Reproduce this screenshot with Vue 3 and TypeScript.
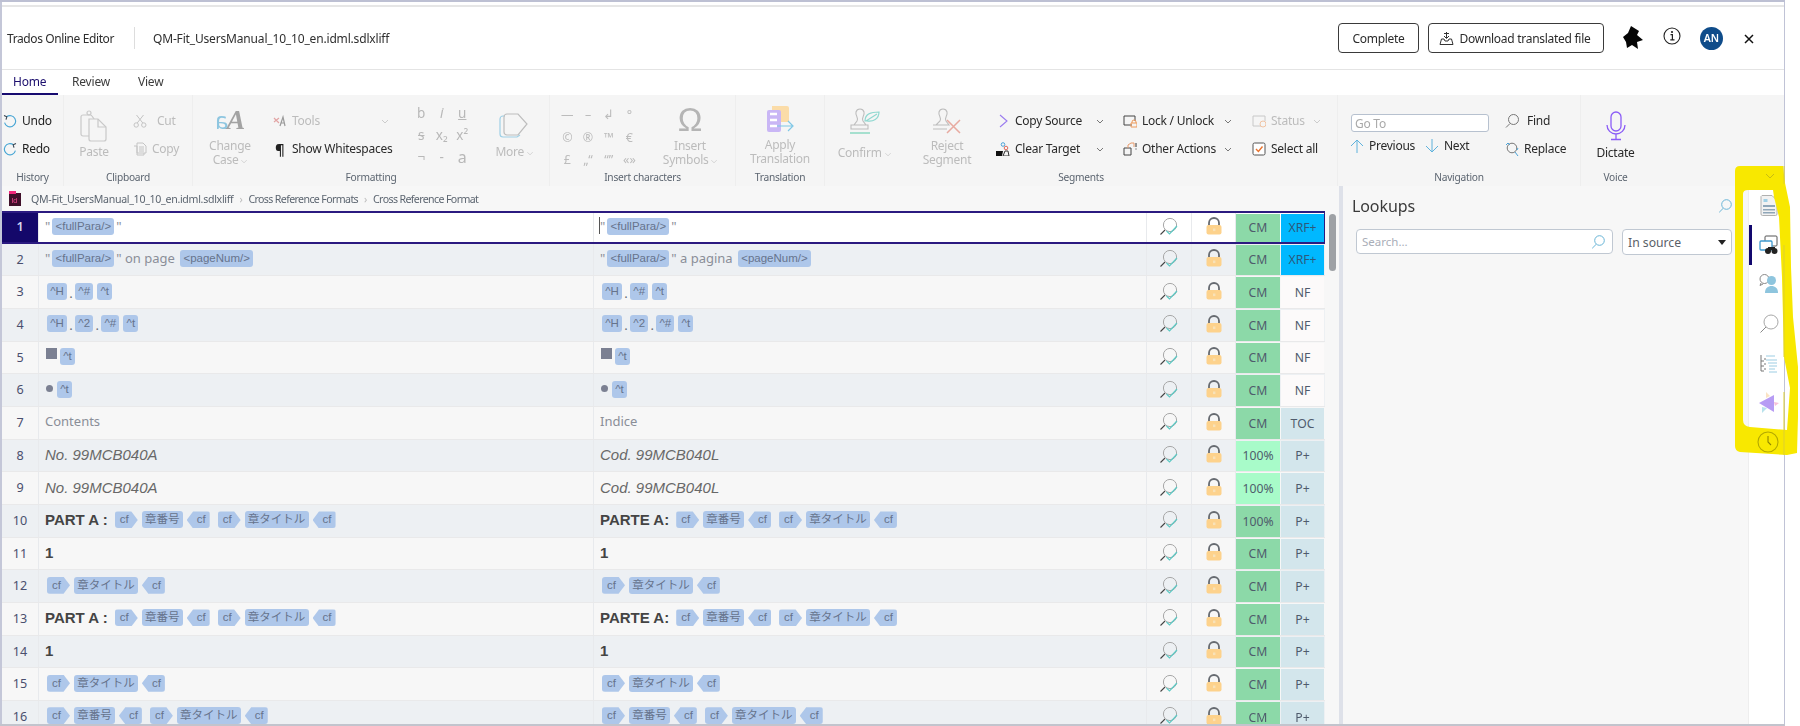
<script setup lang="ts">
type Piece = { k: 'tag' | 'cfr' | 'cfl' | 'txt' | 'it' | 'bd' | 'sq' | 'dot' | 'dt'; s?: string }
const tag = (s: string): Piece => ({ k: 'tag', s })
const txt = (s: string): Piece => ({ k: 'txt', s })
const dt: Piece = { k: 'dt', s: '.' }
const cr: Piece = { k: 'cfr', s: 'cf' }
const cl: Piece = { k: 'cfl', s: 'cf' }
const ban = tag('章番号')
const tit = tag('章タイトル')
const full = tag('<fullPara/>')
const num = tag('<pageNum/>')
const H = tag('^H'), H2 = tag('^2'), Hs = tag('^#'), Ht = tag('^t')
const chain = [cr, ban, cl, { k: 'dt', s: ' ' } as Piece, cr, tit, cl]
const chain2 = [cr, tit, cl]

interface Row { n: number; src: Piece[]; tgt: Piece[]; st: string; stc: string; ty: string; tyc: string }
const mk = (n: number, src: Piece[], tgt: Piece[], st: string, stc: string, ty: string, tyc: string): Row => ({ n, src, tgt, st, stc, ty, tyc })
const rows: Row[] = [
  mk(1, [txt('"'), full, txt('"')], [txt('"'), full, txt('"')], 'CM', 'cm', 'XRF+', 'xrf'),
  mk(2, [txt('"'), full, txt('" on page '), num], [txt('"'), full, txt('" a pagina '), num], 'CM', 'cm', 'XRF+', 'xrf'),
  mk(3, [H, dt, Hs, Ht], [H, dt, Hs, Ht], 'CM', 'cm', 'NF', 'nf'),
  mk(4, [H, dt, H2, dt, Hs, Ht], [H, dt, H2, dt, Hs, Ht], 'CM', 'cm', 'NF', 'nf'),
  mk(5, [{ k: 'sq' }, Ht], [{ k: 'sq' }, Ht], 'CM', 'cm', 'NF', 'nf'),
  mk(6, [{ k: 'dot' }, Ht], [{ k: 'dot' }, Ht], 'CM', 'cm', 'NF', 'nf'),
  mk(7, [txt('Contents')], [txt('Indice')], 'CM', 'cm', 'TOC', 'pp'),
  mk(8, [{ k: 'it', s: 'No. 99MCB040A' }], [{ k: 'it', s: 'Cod. 99MCB040L' }], '100%', 'lt', 'P+', 'pp'),
  mk(9, [{ k: 'it', s: 'No. 99MCB040A' }], [{ k: 'it', s: 'Cod. 99MCB040L' }], '100%', 'lt', 'P+', 'pp'),
  mk(10, [{ k: 'bd', s: 'PART A :' }, ...chain], [{ k: 'bd', s: 'PARTE A:' }, ...chain], '100%', 'cm', 'P+', 'pp'),
  mk(11, [{ k: 'bd', s: '1' }], [{ k: 'bd', s: '1' }], 'CM', 'cm', 'P+', 'pp'),
  mk(12, chain2, chain2, 'CM', 'cm', 'P+', 'pp'),
  mk(13, [{ k: 'bd', s: 'PART A :' }, ...chain], [{ k: 'bd', s: 'PARTE A:' }, ...chain], 'CM', 'cm', 'P+', 'pp'),
  mk(14, [{ k: 'bd', s: '1' }], [{ k: 'bd', s: '1' }], 'CM', 'cm', 'P+', 'pp'),
  mk(15, chain2, chain2, 'CM', 'cm', 'P+', 'pp'),
  mk(16, chain, chain, 'CM', 'cm', 'P+', 'pp'),
]
const fmt = ['b', 'i', 'u', 's', 'x₂', 'x²', '¬', '-', 'a']
const chars = ['—', '–', '↲', '°', '©', '®', '™', '€', '£', '„“', '“”', '«»']
</script>

<template>
  <div class="page">
    <div class="frame">
      <div class="topband"></div>
      <div class="topgap"></div>
      <div class="topline"></div>

      <header class="head">
        <span class="brand">Trados Online Editor</span>
        <span class="vsep"></span>
        <span class="fname">QM-Fit_UsersManual_10_10_en.idml.sdlxliff</span>
        <span class="grow"></span>
        <button class="hbtn complete">Complete</button>
        <button class="hbtn download">
          <svg width="15" height="15" viewBox="0 0 15 15" fill="none" stroke="#333" stroke-width="1"><path d="M7.500 1v6M5 5l2.500 2.500L10 5M5 2.500h5"/><path d="M2.500 8 1 13.500h13L12.500 8H10l-1 2H6L5 8z"/></svg>
          <span>Download translated file</span>
        </button>
        <svg class="star" width="22" height="24" viewBox="0 0 22 24"><path d="M8 0l8 5-2 4 6 5-6 2 1 7-6-4-5 3-1-6-3-5 5-4z" fill="#050505"/></svg>
        <svg class="info" width="18" height="18" viewBox="0 0 18 18" fill="none"><circle cx="9" cy="9" r="8" stroke="#222" stroke-width="1.100"/><path d="M7.500 7.700H9.400v5M7.300 12.900h4.200" stroke="#222" stroke-width="1.200"/><circle cx="9" cy="5" r="1.100" fill="#222"/></svg>
        <span class="avatar">AN</span>
        <svg class="close" width="10" height="10" viewBox="0 0 10 10" stroke="#111" stroke-width="1.500"><path d="M1 1l8 8M9 1L1 9"/></svg>
      </header>

      <nav class="tabs">
        <span class="tab active">Home</span>
        <span class="tab review">Review</span>
        <span class="tab view">View</span>
      </nav>

      <section class="ribbon">
        <div class="group g-history">
          <div class="body">
            <div class="stack">
              <div class="line">
                <svg class="ico14" viewBox="0 0 14 14" fill="none" stroke="#46a5d4" stroke-width="1.100"><path d="M3.600 2.800A5.600 5.600 0 1 1 1.600 8.600"/><path d="M1 1.600l2.800 1.200L3 5.600" stroke="#35424f"/></svg>
                <span class="t hist">Undo</span>
              </div>
              <div class="line">
                <svg class="ico14" viewBox="0 0 14 14" fill="none" stroke="#46a5d4" stroke-width="1.100"><path d="M10.400 2.800A5.600 5.600 0 1 0 12.400 8.600"/><path d="M13 1.600l-2.800 1.200.8 2.800" stroke="#35424f"/></svg>
                <span class="t hist">Redo</span>
              </div>
            </div>
          </div>
          <div class="glabel">History</div>
        </div>
        <div class="group g-clip">
          <div class="body">
            <div class="big paste">
              <svg width="28" height="32" viewBox="0 0 28 32" fill="none" stroke="#c9c9c9" stroke-width="1.200"><path d="M1 7a2 2 0 0 1 2-2h4l3 0a2 2 0 0 1 2 1l2 3v17H3a2 2 0 0 1-2-2z"/><path d="M9 9h9l8 8v12a2 2 0 0 1-2 2H11a2 2 0 0 1-2-2z" fill="#f5f5f5"/><path d="M18 9v8h8"/><circle cx="9" cy="3" r="2"/></svg>
              <span class="t dis">Paste</span>
            </div>
            <div class="stack clipstack">
              <div class="line">
                <svg class="ico14" viewBox="0 0 14 14" fill="none" stroke="#c4c4c4" stroke-width="1"><circle cx="3.200" cy="11" r="2.200"/><circle cx="10.800" cy="11" r="2.200"/><path d="M4.200 9 10.500 1M9.800 9 3.500 1"/></svg>
                <span class="t dis cut">Cut</span>
              </div>
              <div class="line">
                <svg class="ico14" viewBox="0 0 14 14" fill="none" stroke="#c4c4c4" stroke-width="1"><path d="M4 1h6l3 3v7H4zM1 4h3v9h7v-2M6 5h5M6 7h5M6 9h5"/></svg>
                <span class="t dis cp">Copy</span>
              </div>
            </div>
          </div>
          <div class="glabel">Clipboard</div>
        </div>
        <div class="group g-fmt">
          <div class="body">
            <div class="big change">
              <span class="aa"><i class="aa-a">a</i><b class="aa-b">A</b></span>
              <span class="t dis tl">Change<br />Case <em class="chev">⌵</em></span>
            </div>
            <div class="stack toolstack">
              <div class="line">
                <svg class="ico14" viewBox="0 0 14 14" fill="none" stroke-width="1.200"><path d="M1 4l5 5M1 8l5-4" stroke="#e2a4a4"/><path d="M7 12l3-9 2 9M8 9h3.500" stroke="#9a9a9a"/></svg>
                <span class="t dis">Tools</span>
                <svg class="chv dimchv" viewBox="0 0 8 5" fill="none" stroke="#ccc"><path d="M1 1l3 3 3-3"/></svg>
              </div>
              <div class="line">
                <span class="pil">¶</span>
                <span class="t on">Show Whitespaces</span>
              </div>
            </div>
            <div class="fgrid">
              <span v-for="(c, i) in fmt" :key="i" class="fc" :class="{ strike: c === 's', ital: c === 'i', under: c === 'u', big2: c === 'a' }">{{ c }}</span>
            </div>
            <div class="big more">
              <svg width="30" height="26" viewBox="0 0 30 26" fill="none" stroke-width="1.200"><path d="M6 3H4a3 3 0 0 0-3 3v15a3 3 0 0 0 3 3h14l3-2" stroke="#9fd0e6"/><path d="M8 1h11l9 10-9 11H8a3 3 0 0 1-3-3V4a3 3 0 0 1 3-3z" stroke="#bdbdbd"/></svg>
              <span class="t dis">More <em class="chev">⌵</em></span>
            </div>
          </div>
          <div class="glabel">Formatting</div>
        </div>
        <div class="group g-ins">
          <div class="body">
            <div class="cgrid">
              <span v-for="(c, i) in chars" :key="i" class="cc">{{ c }}</span>
            </div>
            <div class="big symbols">
              <span class="omega">Ω</span>
              <span class="t dis tl">Insert<br />Symbols <em class="chev">⌵</em></span>
            </div>
          </div>
          <div class="glabel">Insert characters</div>
        </div>
        <div class="group g-tr">
          <div class="body center">
            <div class="big apply">
              <svg width="28" height="28" viewBox="0 0 28 28" fill="none">
                <path d="M6 0h15a2 2 0 0 1 2 2v14H6z" fill="#fbdca8"/>
                <rect x="1" y="4" width="14" height="22" rx="2" fill="#c9b6f5"/>
                <path d="M4 8h7M4 14h7M4 20h7" stroke="#fff" stroke-width="2.400"/>
                <path d="M11 20h15M22 15l5 5-5 5" stroke="#7fc7e6" stroke-width="1.200"/>
              </svg>
              <span class="t dis tl">Apply<br />Translation</span>
            </div>
          </div>
          <div class="glabel">Translation</div>
        </div>
        <div class="group g-seg">
          <div class="body">
            <div class="big confirm">
              <svg width="32" height="28" viewBox="0 0 32 28" fill="none">
                <path d="M6 18h12l-3-4c-2-4 2-5 1-9-1-4-7-4-8 0-1 4 3 5 1 9z M3 18h17v4H3z" stroke="#bdbdbd" stroke-width="1.100"/>
                <path d="M2 26h20" stroke="#a6e0cf" stroke-width="2"/>
                <path d="M17 14c0-7 6-9 14-9 0 7-6 10-12 9zM18 14l11-7" stroke="#8fd8d0" stroke-width="1.200"/>
              </svg>
              <span class="t dis">Confirm <em class="chev">⌵</em></span>
            </div>
            <div class="big reject">
              <svg width="32" height="30" viewBox="0 0 32 30" fill="none">
                <path d="M5 19h13l-3-4c-2-4 2-5 1-9-1-4-7-4-8 0-1 4 3 5 1 9z M2 19h14M2 23h14" stroke="#bdbdbd" stroke-width="1.100"/>
                <path d="M16 14l13 13M29 14 16 27" stroke="#e8aaa0" stroke-width="1.500"/>
              </svg>
              <span class="t dis tl">Reject<br />Segment</span>
            </div>
            <div class="stack s1">
              <div class="line">
                <svg class="ico14" viewBox="0 0 14 14" fill="none" stroke="#9a7bef" stroke-width="1.100"><path d="M4 1l7 6-7 6"/></svg>
                <span class="t on">Copy Source</span>
                <svg class="chv" viewBox="0 0 8 5" fill="none" stroke="#777"><path d="M1 1l3 3 3-3"/></svg>
              </div>
              <div class="line">
                <svg class="ico14" viewBox="0 0 14 14" fill="none"><path d="M0 9h7l-1 5H0z" fill="#111"/><path d="M9 9h3l1 5H7z" stroke="#333"/><circle cx="7" cy="2.500" r="1.800" stroke="#4aa3d8"/><circle cx="10" cy="6" r="1.800" stroke="#e06a5a"/></svg>
                <span class="t on">Clear Target</span>
                <svg class="chv" viewBox="0 0 8 5" fill="none" stroke="#777"><path d="M1 1l3 3 3-3"/></svg>
              </div>
            </div>
            <div class="stack s2">
              <div class="line">
                <svg class="ico14" viewBox="0 0 14 14" fill="none"><path d="M9 11H1V2h11v5" stroke="#444"/><path d="M9 9V8a2 2 0 0 1 4 0v1M8 9h6v4H8z" stroke="#ef9a5a"/></svg>
                <span class="t on">Lock / Unlock</span>
                <svg class="chv" viewBox="0 0 8 5" fill="none" stroke="#777"><path d="M1 1l3 3 3-3"/></svg>
              </div>
              <div class="line">
                <svg class="ico14" viewBox="0 0 14 14" fill="none"><path d="M1 6h7v7H1z" stroke="#444"/><path d="M5 6V3l3-2h3v4" stroke="#e89a6a"/><path d="M13 1v4M13 6.500v1" stroke="#333"/></svg>
                <span class="t on">Other Actions</span>
                <svg class="chv" viewBox="0 0 8 5" fill="none" stroke="#777"><path d="M1 1l3 3 3-3"/></svg>
              </div>
            </div>
            <div class="stack s3">
              <div class="line">
                <svg class="ico14" viewBox="0 0 14 14" fill="none"><path d="M9 12H1V2h12v5" stroke="#c8c8c8"/><circle cx="11" cy="10" r="3" stroke="#f0c4a4"/></svg>
                <span class="t dis">Status</span>
                <svg class="chv" viewBox="0 0 8 5" fill="none" stroke="#ccc"><path d="M1 1l3 3 3-3"/></svg>
              </div>
              <div class="line">
                <svg class="ico14" viewBox="0 0 14 14" fill="none"><rect x="1" y="1" width="12" height="12" rx="1.500" fill="#fff" stroke="#555"/><path d="M4 7l2.400 2.400L10.500 4.500" stroke="#e8722c" stroke-width="1.400"/></svg>
                <span class="t on">Select all</span>
              </div>
            </div>
          </div>
          <div class="glabel">Segments</div>
        </div>
        <div class="group g-nav">
          <div class="body">
            <div class="navleft">
              <input class="goto" placeholder="Go To" />
              <div class="navline">
                <svg class="ico14" viewBox="0 0 14 14" fill="none" stroke="#5fb2dc" stroke-width="1"><path d="M7 14V1M1 7l6-6 6 6"/></svg>
                <span class="t on prev">Previous</span>
                <svg class="ico14" viewBox="0 0 14 14" fill="none" stroke="#5fb2dc" stroke-width="1"><path d="M7 0v13M1 7l6 6 6-6"/></svg>
                <span class="t on">Next</span>
              </div>
            </div>
            <div class="stack navright">
              <div class="line">
                <svg class="ico14" viewBox="0 0 14 14" fill="none" stroke="#777" stroke-width="1"><circle cx="8.500" cy="5.500" r="5"/><path d="M5 9.500 1 13.500"/></svg>
                <span class="t on find">Find</span>
              </div>
              <div class="line">
                <svg class="ico14" viewBox="0 0 14 14" fill="none" stroke-width="1"><circle cx="7" cy="6" r="4.800" stroke="#777"/><path d="M10 10l3 4M1 3l2-2 2 2M13 6l-1 2" stroke="#4aa3d8"/></svg>
                <span class="t on repl">Replace</span>
              </div>
            </div>
          </div>
          <div class="glabel">Navigation</div>
        </div>
        <div class="group g-voice">
          <div class="body">
            <div class="big dict">
              <svg width="20" height="30" viewBox="0 0 20 30" fill="none" stroke="#8b5cf6" stroke-width="1.300"><rect x="5" y="1" width="10" height="19" rx="5"/><path d="M1 14a9 9 0 0 0 18 0M10 23v5M5 28.500h10"/></svg>
              <span class="t on">Dictate</span>
            </div>
          </div>
          <div class="glabel">Voice</div>
        </div>
      </section>

      <main class="workspace">
        <div class="editor">
          <div class="crumbs">
            <svg width="14" height="15" viewBox="0 0 14 15"><path d="M1 2h12v13H1z" fill="#40102a"/><path d="M1 0h7v3H1z" fill="#f0287a"/><text x="3.500" y="12" font-size="7" fill="#ff4f9a" font-family="Liberation Sans">Id</text></svg>
            <span>QM-Fit_UsersManual_10_10_en.idml.sdlxliff</span>
            <em>›</em><span class="c2">Cross Reference Formats</span>
            <em>›</em><span class="c2">Cross Reference Format</span>
          </div>
          <div class="tablewrap">
            <div class="table">
              <div v-for="r in rows" :key="r.n" class="row" :class="{ odd: r.n % 2 === 1, cur: r.n === 1 }">
                <div class="num">{{ r.n }}</div>
                <div v-for="(side, si) in [r.src, r.tgt]" :key="si" class="seg" :class="si === 0 ? 'src' : 'tgt'">
                  <i v-if="r.n === 1 && si === 1" class="caret"></i>
                  <template v-for="(p, pi) in side" :key="pi">
                    <span v-if="p.k === 'tag'" class="tag">{{ p.s }}</span>
                    <span v-else-if="p.k === 'cfr'" class="tag cf right">{{ p.s }}</span>
                    <span v-else-if="p.k === 'cfl'" class="tag cf left">{{ p.s }}</span>
                    <span v-else-if="p.k === 'sq'" class="sq"></span>
                    <span v-else-if="p.k === 'dot'" class="dot"></span>
                    <span v-else :class="p.k">{{ p.s }}</span>
                  </template>
                </div>
                <div class="iconcell">
                  <svg width="20" height="19" viewBox="0 0 20 19" fill="none"><circle cx="11" cy="8" r="6.600" stroke="#a8a8a8" stroke-width="1"/><path d="M6 13 1.500 17.500" stroke="#444" stroke-width="1.100"/><path d="M7.500 14l3 3 7.500-8" stroke="#5cc9c4" stroke-width="1.200"/></svg>
                </div>
                <div class="iconcell">
                  <svg width="16" height="18" viewBox="0 0 16 18" fill="none"><path d="M3 9V6a5 5 0 0 1 10 0v3" stroke="#666a70" stroke-width="1.800"/><rect x="0.500" y="8" width="15" height="9.500" rx="2" fill="#fdd28c"/><rect x="7" y="11.500" width="2.400" height="2.600" fill="#f8e2b8"/></svg>
                </div>
                <div class="status" :class="r.stc">{{ r.st }}</div>
                <div class="type" :class="r.tyc">{{ r.ty }}</div>
              </div>
            </div>
            <div class="scroll"><div class="thumb"></div></div>
          </div>
        </div>
        <div class="split"></div>
        <aside class="panel">
          <div class="ptitle">
            <span>Lookups</span>
            <svg width="14" height="14" viewBox="0 0 14 14" fill="none" stroke="#68b4d6" stroke-width="1"><circle cx="8.500" cy="5.500" r="4.800"/><path d="M5 9.500 1.200 13.300"/></svg>
          </div>
          <div class="psearch">
            <div class="sbox">
              <span>Search...</span>
              <svg width="14" height="14" viewBox="0 0 14 14" fill="none" stroke="#68b4d6" stroke-width="1"><circle cx="8.500" cy="5.500" r="4.800"/><path d="M5 9.500 1.200 13.300"/></svg>
            </div>
            <div class="sel"><span>In source</span><i class="caretdown"></i></div>
          </div>
        </aside>
        <div class="rail">
          <div class="ri">
            <svg width="18" height="21" viewBox="0 0 18 21" fill="none"><path d="M2 .5h10l5 5V19a1.500 1.500 0 0 1-1.500 1.500h-13A1.500 1.500 0 0 1 1 19V1.500z" fill="#f2f2f2" stroke="#b0b0b0"/><path d="M3.500 4h4v3h-4z" fill="#9fd0e6"/><path d="M3 10h12v2H3zM3 14h12v1.500H3zM3 17h12v1.500H3z" fill="#8fa6b8"/></svg>
          </div>
          <div class="ri act">
            <svg width="19" height="20" viewBox="0 0 19 20" fill="none"><rect x="6" y="1" width="12" height="10" rx="1" stroke="#555"/><rect x="1" y="6" width="12" height="9" rx="1" fill="#fff" stroke="#3f9ad0" stroke-width="1.300"/><circle cx="9" cy="16" r="3" fill="#222"/><circle cx="15.500" cy="16" r="3" fill="#222"/><rect x="9" y="12" width="7" height="3" fill="#222"/></svg>
          </div>
          <div class="ri">
            <svg width="20" height="20" viewBox="0 0 20 20" fill="none"><circle cx="5.500" cy="5" r="4.500" fill="#fff" stroke="#888"/><path d="M2 9 1 11.500 4 10" stroke="#888"/><circle cx="12.500" cy="6.500" r="4.500" fill="#8ec5de"/><path d="M6 19c0-5 3-7 6.500-7s6.500 2 6.500 7z" fill="#8ec5de"/></svg>
          </div>
          <div class="ri">
            <svg width="20" height="20" viewBox="0 0 20 20" fill="none"><circle cx="12" cy="8" r="7" stroke="#a8a8a8" stroke-width="1"/><path d="M7 13 1.500 18.500" stroke="#888" stroke-width="1"/></svg>
          </div>
          <div class="ri">
            <svg width="17" height="19" viewBox="0 0 17 19" fill="none"><path d="M1 1v16h3M1 7h3M1 12h3M4 5h2M4 10h2M4 15h2" stroke="#777"/><path d="M6 2h9M6 6h11M8 9h9M9 12h8M9 15h6M9 18h8" stroke="#9ccde3"/></svg>
          </div>
          <div class="ri">
            <svg width="20" height="22" viewBox="0 0 20 22"><path d="M7 0l4 4-4 2z" fill="#fbe3c4"/><path d="M15 10l5 1-4 3z" fill="#f7c0d8"/><path d="M3 15l5 1-5 5z" fill="#b8e2ec"/><path d="M15 3 0 11l15 9z" fill="#b79cf4"/></svg>
          </div>
        </div>
      </main>
      <div class="bottomline"></div>
    </div>

    <svg class="marker" width="1800" height="726" viewBox="0 0 1800 726">
      <path fill="#f8e800" fill-rule="evenodd" d="M1735 171Q1735 166 1740 166L1783 166 1785 183 1790 207 1791 267 1793 317 1798 367 1798 417 1797 453 1787 455 1740 452Q1735 451 1735 446ZM1743 194Q1743 190 1748 190L1773 190 1774 197 1779 217 1782 277 1784 357 1790 388 1787 430 1750 427Q1743 426 1743 420Z"/>
      <path d="M1784 166V184M1784 245V357M1784 392V455" stroke="#dccf30" stroke-width="1"/>
      <path d="M1766 174l4 4 4-4" fill="none" stroke="#c8bc10" stroke-width="1"/>
      <circle cx="1768" cy="442" r="10" fill="none" stroke="#b3a800" stroke-width="1.100"/>
      <path d="M1768 436v6l3 3" fill="none" stroke="#8f8600" stroke-width="1.100"/>
    </svg>
  </div>
</template>

<style>
html, body { margin: 0; padding: 0; background: #fff; }
</style>

<style scoped>
.page { position: relative; width: 1800px; height: 726px; overflow: hidden; background: #fff; font-family: "Noto Sans", "Open Sans", sans-serif; }
.frame { width: 1782px; height: 726px; border-left: 2px solid #c4c7d8; border-right: 1px solid #c0c3d6; display: flex; flex-direction: column; filter: blur(0.35px); color: #333; }
.topband { height: 2px; background: #bdc0d3; margin-left: -2px; margin-right: -1px; }
.topgap { height: 3px; }
.topline { height: 2px; background: #e6e6e6; }
.head { height: 62px; display: flex; align-items: center; box-sizing: border-box; padding-left: 5px; }
.brand { font-size: 12px; letter-spacing: -0.4px; color: #2e2e2e; width: 127px; }
.vsep { width: 1px; height: 22px; background: #ddd; }
.fname { font-size: 12px; letter-spacing: -0.17px; margin-left: 18px; color: #2e2e2e; }
.grow { flex: 1; }
.hbtn { height: 30px; background: #fff; border: 1px solid #3a3a3a; border-radius: 4px; font: inherit; font-size: 12px; letter-spacing: -0.28px; color: #2b2b2b; padding: 0; display: flex; align-items: center; justify-content: center; box-sizing: border-box; }
.complete { width: 81px; }
.download { width: 176px; margin-left: 9px; gap: 6px; padding-right: 3px; }
.star { margin-left: 19px; }
.info { margin-left: 18px; margin-top: -4px; }
.avatar { width: 23px; height: 23px; border-radius: 50%; background: #0f4c8a; color: #fff; font-size: 10.5px; font-weight: 600; display: flex; align-items: center; justify-content: center; margin-left: 19px; }
.close { margin-left: 21px; margin-right: 30px; margin-top: 1px; }

.tabs { height: 26px; border-top: 1px solid #e4e4e4; box-sizing: border-box; display: flex; position: relative; }
.tab { font-size: 12px; letter-spacing: -0.2px; color: #3c3c3c; line-height: 24px; }
.tab.active { width: 56px; padding-left: 11px; box-sizing: border-box; color: #1c0f6e; border-bottom: 2px solid #170b70; height: 25px; }
.review { margin-left: 14px; }
.view { margin-left: 28px; }

.ribbon { height: 91px; background: #f5f5f5; display: flex; }
.group { display: flex; flex-direction: column; box-sizing: border-box; border-right: 1px solid #eeeeee; flex: none; }
.body { height: 72px; display: flex; }
.body.center { justify-content: center; }
.glabel { height: 19px; font-size: 10.2px; letter-spacing: -0.25px; line-height: 21px; color: #5c6570; text-align: center; }
.g-history { width: 62px; }
.g-clip { width: 129px; }
.g-fmt { width: 357px; }
.g-ins { width: 186px; }
.g-tr { width: 89px; }
.g-seg { width: 513px; }
.g-nav { width: 243px; }
.g-voice { width: 69px; border-right: none; }

.t { font-size: 12px; letter-spacing: -0.25px; line-height: 14px; white-space: nowrap; }
.on { color: #2a2a2a; }
.dis { color: #bcbcbc; }
.tl { text-align: center; }
.chev { font-style: normal; font-size: 8px; vertical-align: 1px; }
.stack { display: flex; flex-direction: column; padding-top: 12px; }
.line { height: 28px; display: flex; align-items: center; }
.ico14 { width: 14px; height: 14px; flex: none; margin-right: 5px; }
.chv { width: 8px; height: 5px; margin-left: auto; margin-right: 2px; flex: none; }
.hist { color: #222; }
.g-history .stack { padding-left: 1px; }
.big { display: flex; flex-direction: column; align-items: center; }

.paste { width: 28px; margin-left: 16px; padding-top: 15px; gap: 3px; }
.clipstack { margin-left: 25px; }
.cut { margin-left: 5px; }
.change { width: 48px; margin-left: 13px; padding-top: 13px; gap: 7px; }
.aa { height: 24px; display: flex; align-items: flex-end; font-family: "Liberation Serif", serif; font-size: 30px; line-height: 24px; }
.aa-a { font-style: normal; font-family: "Noto Sans", sans-serif; font-size: 24px; color: #8ec6e0; transform: scaleX(-1); }
.aa-b { font-style: italic; color: #a3a3a3; font-size: 28px; margin-left: -2px; }
.toolstack { width: 120px; margin-left: 19px; }
.dimchv { margin-right: 4px; }
.pil { width: 14px; margin-right: 5px; font-size: 15px; color: #222; line-height: 14px; font-weight: 600; text-align: center; }
.fgrid { display: grid; grid-template-columns: repeat(3, 20.5px); grid-auto-rows: 22px; margin-left: 18px; padding-top: 7px; align-items: center; justify-items: center; width: 62px; }
.fc { font-size: 13.5px; color: #b8b8b8; line-height: 22px; }
.strike { text-decoration: line-through; }
.ital { font-style: italic; }
.under { text-decoration: underline; }
.big2 { font-size: 16px; }
.more { width: 48px; margin-left: 17px; padding-top: 18px; gap: 6px; }
.cgrid { display: grid; grid-template-columns: repeat(4, 20.7px); grid-auto-rows: 22.5px; margin-left: 7px; padding-top: 9px; align-items: center; justify-items: center; width: 83px; }
.cc { font-size: 12.5px; color: #bcbcbc; line-height: 22px; }
.symbols { width: 72px; margin-left: 14px; padding-top: 6px; }
.omega { font-family: "Liberation Sans", sans-serif; font-size: 33px; line-height: 37px; color: #b5b5b5; margin-bottom: 1px; }
.apply { padding-top: 11px; gap: 4px; }
.confirm { width: 60px; margin-left: 9px; padding-top: 12px; gap: 11px; }
.reject { width: 60px; margin-left: 23px; padding-top: 11px; gap: 3px; }
.s1 { width: 110px; margin-left: 19px; }
.s2 { width: 111px; margin-left: 17px; }
.s3 { width: 71px; margin-left: 18px; }
.navleft { width: 140px; margin-left: 12px; padding-top: 19px; }
.goto { display: block; width: 138px; height: 18px; box-sizing: border-box; border: 1px solid #b7c1cf; border-radius: 3px; background: #fff; font: inherit; font-size: 12px; letter-spacing: -0.25px; padding: 0 3px; margin-left: 1px; outline: none; }
.goto::placeholder { color: #a9a9a9; opacity: 1; }
.navline { display: flex; align-items: center; height: 20px; margin-top: 4px; }
.prev { width: 56px; }
.navright { margin-left: 15px; }
.find { margin-left: 3px; }
.dict { width: 100%; padding-top: 16px; gap: 5px; }

.workspace { flex: 1; display: flex; min-height: 0; background: #f7f7f7; }
.editor { width: 1336px; display: flex; flex-direction: column; flex: none; }
.crumbs { height: 25px; display: flex; align-items: center; padding-left: 6px; gap: 6px; font-size: 10.6px; letter-spacing: -0.3px; color: #5c6570; flex: none; box-sizing: border-box; }
.crumbs svg { margin-right: 3px; }
.crumbs em { font-style: normal; color: #bbb; }
.c2 { letter-spacing: -0.62px; }
.tablewrap { flex: 1; display: flex; min-height: 0; overflow: hidden; }
.table { width: 1323px; flex: none; }
.row { display: grid; grid-template-columns: 37px 555px 553px 45px 44px 45px 44px; height: 32.67px; background: #edf0f3; box-sizing: border-box; border-bottom: 1.5px solid #e9e9ea; }
.row.odd { background: #f7f7f7; }
.row.cur { background: #fff; border-top: 2px solid #2b1a80; border-bottom: 2px solid #2b1a80; border-right: 1px solid #2b1a80; }
.num { font-size: 12.6px; color: #4a4f6e; text-align: center; line-height: 31px; border-right: 1.5px solid #e8eaed; }
.cur .num { background: #14086a; color: #d8d8ee; line-height: 28px; font-weight: 600; }
.seg { display: flex; align-items: flex-start; padding: 6.5px 0 0 6px; box-sizing: border-box; overflow: hidden; position: relative; border-right: 1px solid #e8eaed; }
.cur .seg { padding-top: 4.5px; }
.caret { position: absolute; left: 5px; top: 4px; width: 1px; height: 17px; background: #555; }
.tag { height: 17px; line-height: 17px; padding: 0 3.2px; margin: 0 2px; background: #aec7ea; border-radius: 3px; font-family: "Liberation Sans", "Noto Sans CJK JP", sans-serif; font-size: 11.5px; color: #66738c; white-space: nowrap; flex: none; }
.cf { width: 23px; box-sizing: border-box; padding: 0; }
.cf.right { padding-left: 5px; clip-path: polygon(0 0, 72% 0, 100% 50%, 72% 100%, 0 100%); }
.cf.left { padding-left: 10px; clip-path: polygon(28% 0, 100% 0, 100% 100%, 28% 100%, 0 50%); }
.txt { font-size: 13px; line-height: 17px; color: #8a8e98; white-space: pre; }
.dt { font-size: 13px; line-height: 21px; color: #6a6e78; width: 4px; text-align: center; flex: none; }
.it { font-family: "Liberation Sans", sans-serif; font-style: italic; font-size: 15px; line-height: 17px; color: #686868; }
.bd { font-family: "Liberation Sans", sans-serif; font-weight: 700; font-size: 15px; line-height: 17px; color: #444; margin-right: 5px; }
.sq { width: 11px; height: 11px; background: #7b8092; margin: 0 1px 0 1px; flex: none; }
.dot { width: 7px; height: 7px; border-radius: 50%; background: #7b8092; margin: 4px 2px 0 1px; flex: none; }
.iconcell { display: flex; align-items: center; justify-content: center; border-right: 1px solid #e8eaed; padding-bottom: 2px; }
.status, .type { font-size: 12.2px; color: #4f5b6c; display: flex; align-items: center; justify-content: center; margin: 1px 1px 0 0; }
.cm { background: #8cd9a8; }
.lt { background: #a8fbc9; }
.xrf { background: #00b8ff; color: #2c5a7c; }
.nf { background: #fcfafa; }
.pp { background: #d3e6ec; }
.scroll { flex: 1; }
.thumb { width: 7px; height: 57px; background: #9ea1a5; border-radius: 4px; margin: 3px 0 0 4px; }
.split { width: 4px; flex: none; background: #dee1e9; margin-left: 1px; }
.panel { width: 405px; flex: none; }
.ptitle { display: flex; align-items: center; justify-content: space-between; font-size: 16px; letter-spacing: -0.1px; color: #3a3a3a; padding: 8px 16px 0 9px; height: 24px; }
.psearch { display: flex; margin: 11px 0 0 13px; gap: 9px; }
.sbox { width: 257px; height: 25px; box-sizing: border-box; border: 1px solid #c0c8d2; border-radius: 4px; background: #fff; display: flex; align-items: center; justify-content: space-between; padding: 0 7px 0 5px; font-size: 11.5px; color: #a9aeb8; }
.sel { width: 110px; height: 26px; box-sizing: border-box; border: 1px solid #c0c8d2; border-radius: 4px; background: #fff; display: flex; align-items: center; justify-content: space-between; padding: 0 5px 0 5px; font-size: 12.2px; color: #5a5f68; }
.caretdown { width: 0; height: 0; border-left: 4px solid transparent; border-right: 4px solid transparent; border-top: 5px solid #222; }
.rail { flex: 1; background: #fff; border-left: 1px solid #eeeeee; }
.ri { height: 39.4px; display: flex; align-items: center; justify-content: center; padding-left: 4px; box-sizing: border-box; }
.ri.act { border-left: 3px solid #12086e; padding-left: 1px; }
.bottomline { height: 2px; background: #c2c4cd; margin-left: -2px; margin-right: -1px; position: relative; }
.marker { position: absolute; left: 0; top: 0; pointer-events: none; }
</style>
